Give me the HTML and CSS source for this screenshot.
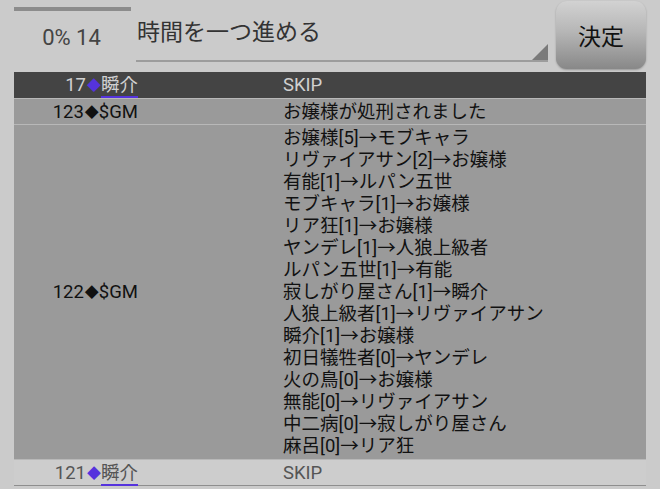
FILE: index.html
```html
<!DOCTYPE html>
<html lang="ja">

<head>
    <meta charset="UTF-8">
    <meta name="viewport" content="width=device-width, initial-scale=1.0">
    <title>ログ</title>

    <link rel="stylesheet" href="styles.css">
</head>

<body>
    <div class="top">
        <div class="status">
            <div class="status-bar"></div>
            <div class="status-text">0% 14</div>
        </div>

        <div class="field">
            <span class="field-value">時間を一つ進める</span>
            <span class="field-arrow"></span>
        </div>

        <button type="button" class="submit">決定</button>
    </div>

    <div class="log">
        <div class="row row-dark">
            <div class="who">17<span class="mark mark-blue">◆</span><span class="name">瞬介</span></div>
            <div class="what">SKIP</div>
        </div>

        <div class="row">
            <div class="who">123<span class="mark">◆</span>$GM</div>
            <div class="what">お嬢様が処刑されました</div>
        </div>

        <div class="row row-tall">
            <div class="who">122<span class="mark">◆</span>$GM</div>
            <div class="what">
                お嬢様[5]→モブキャラ<br>
                リヴァイアサン[2]→お嬢様<br>
                有能[1]→ルパン五世<br>
                モブキャラ[1]→お嬢様<br>
                リア狂[1]→お嬢様<br>
                ヤンデレ[1]→人狼上級者<br>
                ルパン五世[1]→有能<br>
                寂しがり屋さん[1]→瞬介<br>
                人狼上級者[1]→リヴァイアサン<br>
                瞬介[1]→お嬢様<br>
                初日犠牲者[0]→ヤンデレ<br>
                火の鳥[0]→お嬢様<br>
                無能[0]→リヴァイアサン<br>
                中二病[0]→寂しがり屋さん<br>
                麻呂[0]→リア狂
            </div>
        </div>

        <div class="row row-light">
            <div class="who">121<span class="mark mark-blue">◆</span><span class="name">瞬介</span></div>
            <div class="what">SKIP</div>
        </div>
    </div>
</body>

</html>
```

FILE: styles.css
```css
* {
    margin: 0;
    padding: 0;
    box-sizing: border-box;
}

body {
    background-color: #cbcbcb;
    font-family: Roboto, "Noto Sans CJK JP", sans-serif;
    color: #111;
}

/* header: progress, select, button */
.top {
    display: flex;
    height: 71px;
    padding: 0 14px;
}

.status {
    width: 122px;
    display: flex;
    flex-direction: column;
}

.status-bar {
    height: 4px;
    width: 117px;
    margin-top: 7px;
    background-color: #8c8c8c;
}

.status-text {
    font-size: 22px;
    color: #444;
    text-align: center;
    padding-top: 14px;
    padding-right: 7px;
}

.field {
    flex: 1;
    position: relative;
    height: 62px;
    border-bottom: 2px solid #9c9c9c;
    padding-left: 1px;
}

.field-value {
    display: block;
    font-size: 23px;
    line-height: 28px;
    color: #333;
    padding-top: 19px;
}

.field-arrow {
    position: absolute;
    right: 0;
    bottom: 0;
    width: 0;
    height: 0;
    border-left: 16px solid transparent;
    border-bottom: 16px solid #7a7a7a;
}

.submit {
    width: 90px;
    height: 68px;
    margin: 1px 0 0 8px;
    border: none;
    border-radius: 11px;
    background-image: linear-gradient(to bottom, #d2d2d2, #b6b6b6 45%, #888);
    box-shadow: 0 1px 2px rgba(0, 0, 0, .25);
    font-family: "Noto Sans CJK JP", sans-serif;
    font-size: 23px;
    color: #111;
}

/* log table */
.log {
    margin: 1px 14px 0;
    display: flex;
    flex-direction: column;
    gap: 1px;
    background-color: #b8b8b8;
    border-bottom: 1px solid #8e8e8e;
}

.row {
    display: grid;
    grid-template-columns: 124px 1fr;
    align-items: center;
    min-height: 25px;
    background-color: #9a9a9a;
    font-size: 18.5px;
    line-height: 22px;
}

.who {
    text-align: right;
    white-space: nowrap;
}

.what {
    padding-left: 145px;
    white-space: nowrap;
}

.row-tall {
    padding: 2px 0;
}

.row-dark {
    min-height: 26px;
    background-color: #444;
    color: #d0d0d0;
}

.row-light {
    background-color: #cdcdcd;
    color: #555;
}

.mark {
    display: inline-block;
    font-size: 14px;
    padding-left: 1px;
    vertical-align: 1px;
}

.mark-blue {
    color: #5533dd;
}

.name {
    border-bottom: 2px solid #5533dd;
}
```
